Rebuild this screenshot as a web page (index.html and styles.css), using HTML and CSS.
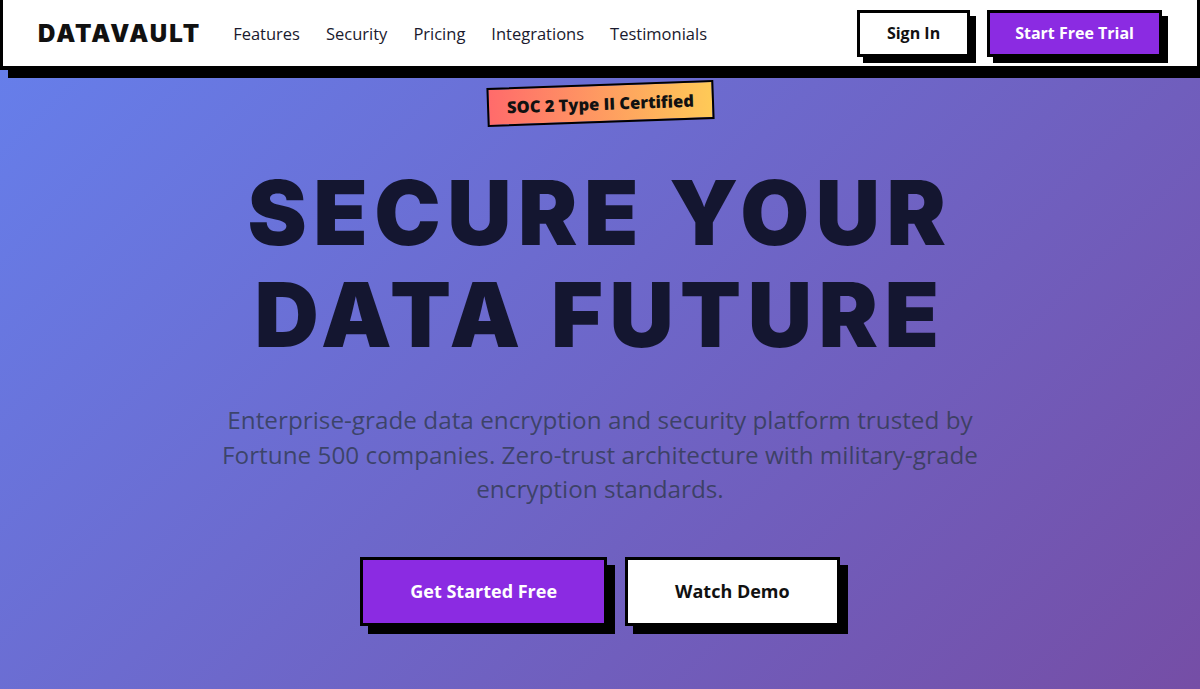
FILE: index.html
```html
<!DOCTYPE html>
<html lang="en">
<head>
    <meta charset="utf-8">
    <meta name="viewport" content="width=device-width, initial-scale=1.0">
    <title>DataVault - Secure Your Data Future</title>
    <link rel="stylesheet" href="styles.css">
</head>
<body>
    <header class="nav">
        <div class="logo">DATAVAULT</div>
        <ul class="links">
            <li><a href="#">Features</a></li>
            <li><a href="#">Security</a></li>
            <li><a href="#">Pricing</a></li>
            <li><a href="#">Integrations</a></li>
            <li><a href="#">Testimonials</a></li>
        </ul>
        <div class="actions">
            <a href="#" class="btn btn-white">Sign In</a>
            <a href="#" class="btn btn-purple">Start Free Trial</a>
        </div>
    </header>

    <section class="hero">
        <div class="badge">SOC 2 Type II Certified</div>
        <h1 class="title">SECURE YOUR<br>DATA FUTURE</h1>
        <p class="subtitle">Enterprise-grade data encryption and security platform trusted by Fortune 500 companies. Zero-trust architecture with military-grade encryption standards.</p>
        <div class="cta">
            <a href="#" class="btn btn-big btn-purple">Get Started Free</a>
            <a href="#" class="btn btn-big btn-white">Watch Demo</a>
        </div>
    </section>

    <section class="features">
        <h2>Built for Security Teams</h2>
        <div class="grid">
            <div class="card">End-to-end encryption</div>
            <div class="card">Zero-trust access</div>
            <div class="card">Audit logging</div>
        </div>
    </section>
</body>
</html>
```

FILE: styles.css
```css
* {
    margin: 0;
    padding: 0;
    box-sizing: border-box;
}
body {
    font-family: "Open Sans", "Noto Sans", sans-serif;
    color: #1a1a2e;
    background: #fff;
}
a {
    text-decoration: none;
    color: inherit;
}

/* header */
.nav {
    position: relative;
    z-index: 5;
    display: flex;
    align-items: center;
    height: 70px;
    padding: 0 35px;
    background: #fff;
    border: 3px solid #000;
    border-top: 0;
    border-bottom-width: 4px;
    box-shadow: 8px 8px 0 #000;
}
.logo {
    font-family: Inter, sans-serif;
    font-weight: 900;
    font-size: 24px;
    letter-spacing: 2px;
    color: #111;
    margin-right: 32px;
}
.links {
    display: flex;
    list-style: none;
    gap: 26px;
}
.links a {
    font-size: 16.5px;
    color: #1a1a2e;
}
.actions {
    margin-left: auto;
    display: flex;
    gap: 17px;
}

/* buttons */
.btn {
    display: inline-block;
    font-weight: 700;
    font-size: 16px;
    line-height: 23px;
    padding: 9px 25px;
    border: 3px solid #000;
    box-shadow: 6px 6px 0 #000;
}
.btn-white {
    background: #fff;
    color: #111;
}
.btn-white:not(.btn-big) {
    padding: 9px 27px;
}
.btn-purple {
    background: #8b2be2;
    color: #fff;
}
.btn-big {
    font-size: 18px;
    line-height: 24px;
    padding: 19.5px 47px;
    box-shadow: 8px 8px 0 #000;
}

/* hero */
.hero {
    display: flex;
    flex-direction: column;
    align-items: center;
    text-align: center;
    min-height: 720px;
    padding-top: 14px;
    background: linear-gradient(135deg, #667eea 0%, #764ba2 100%);
}
.badge {
    font-weight: 800;
    font-size: 16.5px;
    padding: 6px 18px;
    background: linear-gradient(90deg, #ff6b6b, #feca57);
    border: 2px solid #000;
    transform: rotate(-2deg);
    color: #111;
}
.title {
    font-family: Inter, sans-serif;
    font-weight: 900;
    font-size: 89px;
    line-height: 102px;
    letter-spacing: 6.5px;
    color: #141630;
    margin-top: 39px;
}
.subtitle {
    max-width: 800px;
    font-size: 24.3px;
    line-height: 34.5px;
    color: rgba(45, 55, 72, 0.75);
    margin-top: 37px;
}
.cta {
    display: flex;
    gap: 18px;
    margin-top: 50px;
}

/* below the fold */
.features {
    padding: 80px 35px;
    text-align: center;
    min-height: 2000px;
}
.features h2 {
    font-size: 48px;
    font-weight: 900;
}
.grid {
    display: grid;
    grid-template-columns: repeat(3, 1fr);
    gap: 24px;
    margin-top: 40px;
}
.card {
    border: 3px solid #000;
    box-shadow: 6px 6px 0 #000;
    padding: 40px 20px;
    font-weight: 700;
}
```
